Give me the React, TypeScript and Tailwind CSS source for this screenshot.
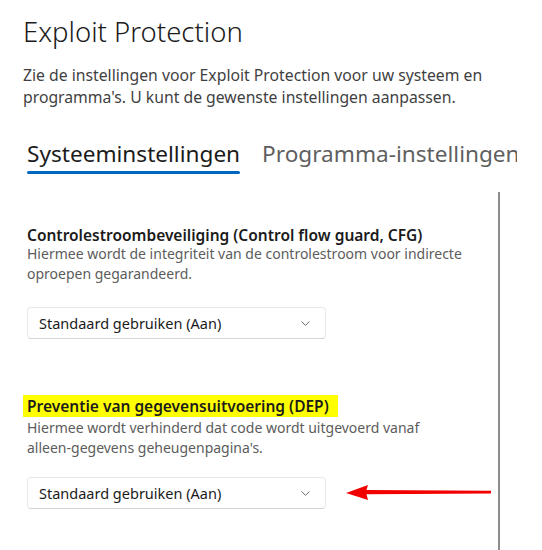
function Chevron() {
  return (
    <svg width="9" height="5" viewBox="0 0 9 5" className="shrink-0">
      <polyline points="0.5,0.5 4.5,4.3 8.5,0.5" fill="none" stroke="#6a6a6a" strokeWidth="1" />
    </svg>
  )
}

function Dropdown({ value }: { value: string }) {
  return (
    <div className="flex h-[32px] w-[299px] items-center justify-between rounded-[4px] border border-[#e8e8e8] border-b-[#d6d6d6] bg-white pl-[11px] pr-[15px] pt-[1px]">
      <span className="text-[14.5px] text-[#1b1b1b]">{value}</span>
      <Chevron />
    </div>
  )
}

function RedArrow() {
  return (
    <svg width="146" height="18" viewBox="0 0 146 18" className="ml-[20px] shrink-0">
      <polygon points="0,9 22,1 20.5,6 145,6.7 145,9.4 20.5,10.2 22,16" fill="#f20000" />
    </svg>
  )
}

export default function App() {
  return (
    <div
      className="h-[550px] w-[542px] overflow-hidden bg-white"
      style={{ fontFamily: '"Segoe UI", "Noto Sans", sans-serif' }}
    >
      {/* header */}
      <div className="pl-[23px] pt-[14px]">
        <h1 className="text-[27.5px] font-light leading-[36px] text-[#1b1b1b]">Exploit Protection</h1>
        <p className="mt-[15px] w-[480px] text-[15.75px] leading-[21.5px] text-[#3f3f3f]">
          Zie de instellingen voor Exploit Protection voor uw systeem en programma's. U kunt de gewenste
          instellingen aanpassen.
        </p>
      </div>

      {/* tabs, clipped at the right like the pane */}
      <div className="ml-[27px] mt-[31px] flex w-[490px] gap-[22px] overflow-hidden whitespace-nowrap">
        <div className="flex shrink-0 flex-col">
          <span className="text-[22.6px] leading-[30px] text-[#1b1b1b]">Systeeminstellingen</span>
          <span className="mt-[2px] h-[3px] rounded-full bg-[#0067c0]" />
        </div>
        <span className="shrink-0 text-[22.6px] leading-[30px] text-[#5f5f5f]">Programma-instellingen</span>
      </div>

      {/* scrollable area */}
      <div className="mt-[18px] h-[400px] w-[500px] border-r-2 border-[#8c8c8c] pl-[27px] pt-[35px]">
        {/* CFG */}
        <h3 className="text-[15.5px] font-semibold leading-[17px] text-[#1b1b1b]">
          Controlestroombeveiliging (Control flow guard, CFG)
        </h3>
        <p className="w-[450px] text-[14px] leading-[20px] text-[#5c5c5c]">
          Hiermee wordt de integriteit van de controlestroom voor indirecte oproepen gegarandeerd.
        </p>
        <div className="mt-[23px]">
          <Dropdown value="Standaard gebruiken (Aan)" />
        </div>

        {/* DEP */}
        <h3 className="-ml-[4px] mt-[56px] inline-block bg-[#ffff00] pl-[4px] pr-[9px] text-[15.5px] font-semibold leading-[22px] text-[#1b1b1b]">
          Preventie van gegevensuitvoering (DEP)
        </h3>
        <p className="w-[425px] text-[14px] leading-[20px] text-[#5c5c5c]">
          Hiermee wordt verhinderd dat code wordt uitgevoerd vanaf alleen-gegevens geheugenpagina's.
        </p>
        <div className="mt-[19px] flex items-center">
          <Dropdown value="Standaard gebruiken (Aan)" />
          <RedArrow />
        </div>
      </div>
    </div>
  )
}
